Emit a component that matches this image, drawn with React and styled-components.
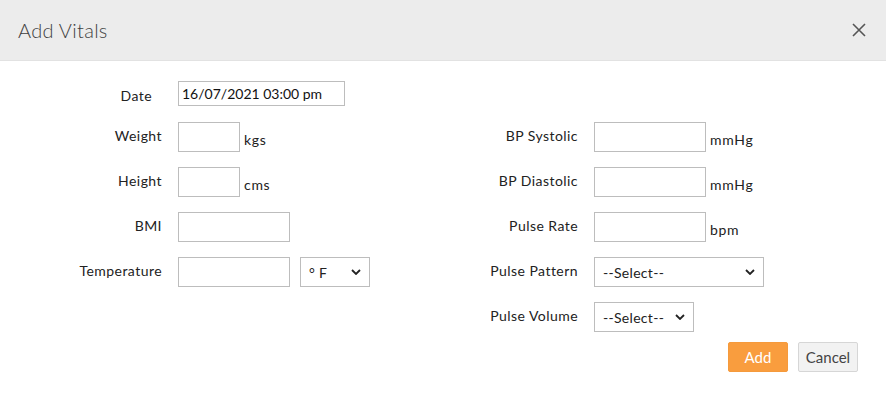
import React from 'react'
import styled, { createGlobalStyle } from 'styled-components'

const Global = createGlobalStyle`
  body {
    margin: 0;
    background: #fff;
    font-family: Lato, "Open Sans", sans-serif;
  }
`

const Modal = styled.div`
  width: 886px;
  height: 397px;
  background: #fff;
`

const Header = styled.div`
  height: 60px;
  background: #ececec;
  border-bottom: 1px solid #e2e2e2;
  display: flex;
  align-items: center;
  justify-content: space-between;
  padding: 0 20px 0 18px;
`

const Title = styled.h3`
  margin: 0;
  font-size: 20px;
  font-weight: 300;
  letter-spacing: 0.3px;
  color: #3f3f3f;
`

const Close = styled.button`
  border: 0;
  background: none;
  padding: 0;
  width: 14px;
  height: 14px;
  display: flex;
  cursor: pointer;
`

const Body = styled.div`
  padding: 20px 28px 0 0;
`

const Grid = styled.div`
  display: grid;
  grid-template-columns: 162px 1fr;
  column-gap: 16px;
  row-gap: 15px;
  align-items: center;
  align-content: start;
  flex: ${p => (p.fixed ? '0 0 416px' : '1 1 auto')};
`

const Columns = styled.div`
  display: flex;
  margin-top: 16px;
`

const Label = styled.label`
  text-align: right;
  font-size: 14px;
  letter-spacing: 0.45px;
  color: #222;
  padding-right: ${p => p.inset || 0}px;
  padding-bottom: ${p => (p.inset ? 0 : 3)}px;
  padding-top: ${p => (p.inset ? 3 : 0)}px;
`

const Control = styled.div`
  display: flex;
  align-items: center;
  gap: 10px;
  height: ${p => p.h || 30}px;
`

const Input = styled.input`
  box-sizing: border-box;
  width: ${p => p.w}px;
  height: ${p => p.h || 30}px;
  border: 1px solid #bdbdbd;
  padding: 0 3px;
  font: 14px Lato, sans-serif;
  color: #111;
  outline: none;
`

const Unit = styled.span`
  font-size: 14px;
  letter-spacing: 0.7px;
  color: #222;
  align-self: flex-end;
  padding-bottom: 4px;
  margin-left: -6px;
`

const Select = styled.select`
  box-sizing: border-box;
  appearance: none;
  width: ${p => p.w}px;
  height: 30px;
  border: 1px solid #bdbdbd;
  background: #fff url("data:image/svg+xml;utf8,<svg xmlns='http://www.w3.org/2000/svg' width='10' height='6' viewBox='0 0 10 6'><path d='M1 1l4 4 4-4' fill='none' stroke='%23222' stroke-width='1.8'/></svg>") no-repeat right 8px center;
  padding: 0 20px 0 8px;
  font: 14px Lato, sans-serif;
  letter-spacing: 0.3px;
  color: #222;
  outline: none;
`

const Actions = styled.div`
  display: flex;
  justify-content: flex-end;
  gap: 10px;
  margin-top: 10px;
`

const Button = styled.button`
  box-sizing: border-box;
  width: 60px;
  height: 30px;
  font: 15px Lato, sans-serif;
  border-radius: 2px;
  cursor: pointer;
  border: 1px solid ${p => (p.primary ? '#f59a3c' : '#d6d6d6')};
  background: ${p => (p.primary ? '#f99d3e' : '#f2f2f2')};
  color: ${p => (p.primary ? '#fff' : '#444')};
`

const Row = ({ label, children, h, inset }) => (
  <>
    <Label inset={inset}>{label}</Label>
    <Control h={h}>{children}</Control>
  </>
)

export default function App() {
  return (
    <>
      <Global />
      <Modal>
        <Header>
          <Title>Add Vitals</Title>
          <Close aria-label="Close">
            <svg width="14" height="14" viewBox="0 0 14 14">
              <path d="M1 1l12 12M13 1L1 13" stroke="#555" strokeWidth="1.6" />
            </svg>
          </Close>
        </Header>
        <Body>
          <Grid>
            <Row label="Date" h={25} inset={10}>
              <Input w={167} h={25} defaultValue="16/07/2021 03:00 pm" />
            </Row>
          </Grid>
          <Columns>
            <Grid fixed>
              <Row label="Weight">
                <Input w={62} />
                <Unit>kgs</Unit>
              </Row>
              <Row label="Height">
                <Input w={62} />
                <Unit>cms</Unit>
              </Row>
              <Row label="BMI">
                <Input w={112} />
              </Row>
              <Row label="Temperature">
                <Input w={112} />
                <Select w={70} defaultValue="F">
                  <option value="F">° F</option>
                  <option value="C">° C</option>
                </Select>
              </Row>
            </Grid>
            <Grid>
              <Row label="BP Systolic">
                <Input w={112} />
                <Unit>mmHg</Unit>
              </Row>
              <Row label="BP Diastolic">
                <Input w={112} />
                <Unit>mmHg</Unit>
              </Row>
              <Row label="Pulse Rate">
                <Input w={112} />
                <Unit>bpm</Unit>
              </Row>
              <Row label="Pulse Pattern">
                <Select w={170}>
                  <option>--Select--</option>
                </Select>
              </Row>
              <Row label="Pulse Volume">
                <Select w={100}>
                  <option>--Select--</option>
                </Select>
              </Row>
            </Grid>
          </Columns>
          <Actions>
            <Button primary>Add</Button>
            <Button>Cancel</Button>
          </Actions>
        </Body>
      </Modal>
    </>
  )
}
